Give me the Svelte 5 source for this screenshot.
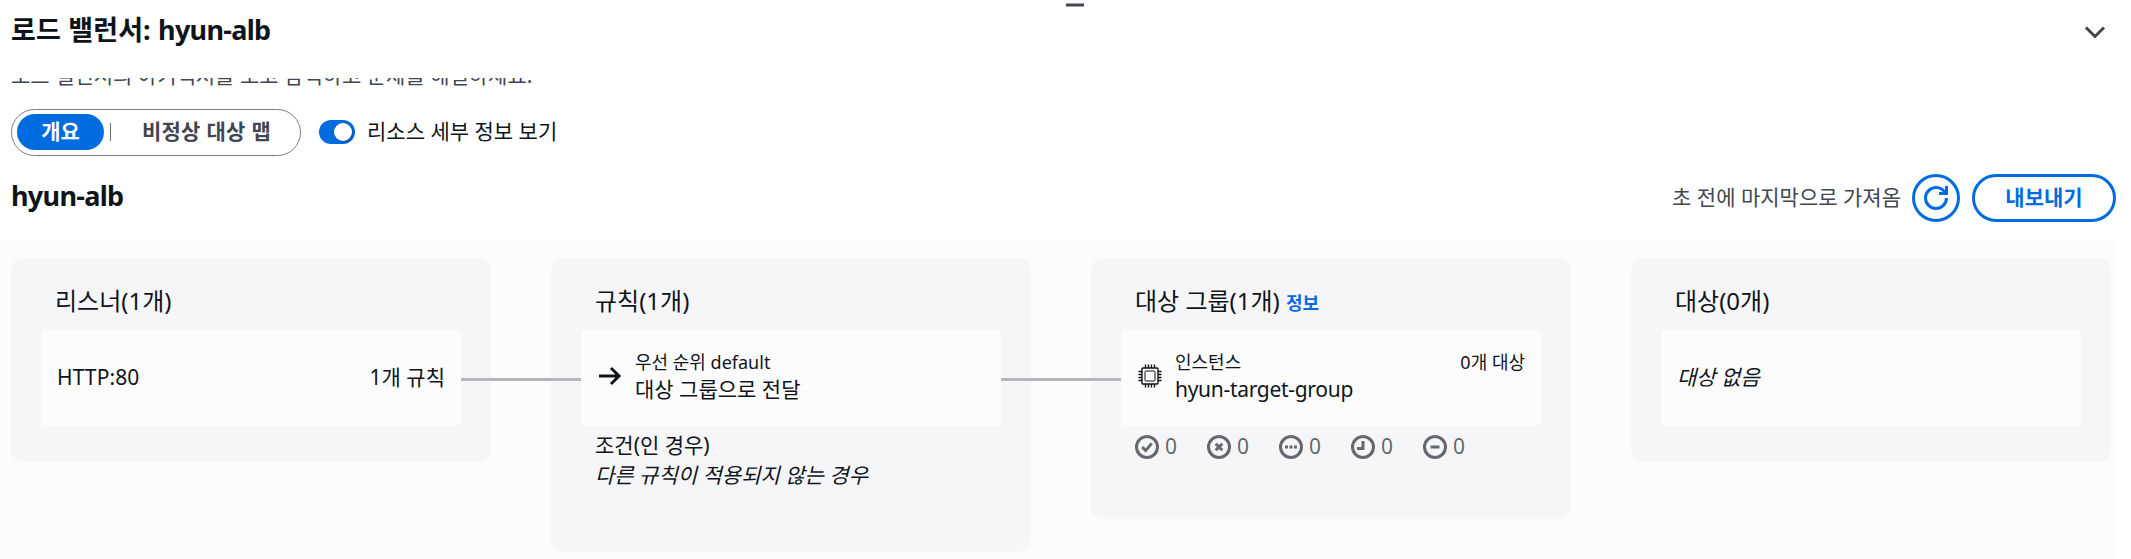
<script>
  const statuses = ['healthy', 'unhealthy', 'unused', 'initial', 'draining'];
  const pins = [7.5, 10.5, 13.5, 16.5];
</script>

<div class="panel">
  <div class="handle"></div>
  <header>
    <h1>로드 밸런서: <span class="name">hyun-alb</span></h1>
    <svg class="chevron" width="24" height="24" viewBox="0 0 24 24"><path d="M3 7.5l9 9 9-9" /></svg>
  </header>

  <div class="scroll">
    <p class="desc">로드 밸런서의 아키텍처를 보고 탐색하고 문제를 해결하세요.</p>

    <div class="controls">
      <div class="segments">
        <button class="seg active">개요</button>
        <i></i>
        <button class="seg">비정상 대상 맵</button>
      </div>
      <span class="toggle"><b></b></span>
      <span class="label">리소스 세부 정보 보기</span>
    </div>

    <div class="bar">
      <h2 class="name">hyun-alb</h2>
      <span class="fetched">초 전에 마지막으로 가져옴</span>
      <button class="round" aria-label="새로 고침">
        <svg width="24" height="24" viewBox="0 0 16 16"><path d="M15 8c0 3.87-3.13 7-7 7s-7-3.13-7-7 3.13-7 7-7c2.79 0 5.2 1.63 6.33 4" /><path d="M10 5h5V0" /></svg>
      </button>
      <button class="export">내보내기</button>
    </div>

    <main>
      <section class="card">
        <h3>리스너(1개)</h3>
        <div class="box">
          <span class="port">HTTP:80</span>
          <span class="end">1개 규칙</span>
        </div>
      </section>
      <div class="link"></div>
      <section class="card rules">
        <h3>규칙(1개)</h3>
        <div class="box">
          <svg class="lead" width="24" height="24" viewBox="0 0 24 24"><path class="arrow" d="M1 12h20M13 4l8 8-8 8" /></svg>
          <div class="lines">
            <small>우선 순위 default</small>
            <span>대상 그룹으로 전달</span>
          </div>
        </div>
        <div class="conditions">
          <div>조건(인 경우)</div>
          <em>다른 규칙이 적용되지 않는 경우</em>
        </div>
      </section>
      <div class="link"></div>
      <section class="card groups">
        <h3>대상 그룹(1개) <a href="#info">정보</a></h3>
        <div class="box">
          <svg class="lead" width="24" height="24" viewBox="0 0 24 24">
            <g class="chip">
              <rect x="4" y="4" width="16" height="16" rx="1" />
              <rect class="core" x="7" y="7" width="10" height="10" rx="1" />
              {#each pins as p}
                <path d="M{p} 0.5V4M{p} 20v3.5M0.5 {p}H4M20 {p}h3.5" />
              {/each}
            </g>
          </svg>
          <div class="lines">
            <small>인스턴스</small>
            <span class="group-name">hyun-target-group</span>
          </div>
          <small class="count">0개 대상</small>
        </div>
        <div class="statuses">
          {#each statuses as s}
            <span class="status">
              <svg width="24" height="24" viewBox="0 0 16 16">
                <circle cx="8" cy="8" r="7" />
                {#if s === 'healthy'}
                  <path d="M4.8 8l2.3 2.4 4-4.8" />
                {:else if s === 'unhealthy'}
                  <path d="M5.8 5.8l4.4 4.4M10.2 5.8l-4.4 4.4" />
                {:else if s === 'unused'}
                  <path d="M4 8h2M7 8h2M10 8h2" />
                {:else if s === 'initial'}
                  <path d="M8 4v5H4" />
                {:else}
                  <path d="M5 8h6" />
                {/if}
              </svg><span class="num">0</span>
            </span>
          {/each}
        </div>
      </section>
      <div class="link none"></div>
      <section class="card">
        <h3>대상(0개)</h3>
        <div class="box"><em>대상 없음</em></div>
      </section>
    </main>
  </div>
</div>

<style>
  :global(body) { background: #fff; overflow: hidden; }
  .panel {
    box-sizing: border-box; width: 2131px; height: 559px; overflow: hidden;
    display: flex; flex-direction: column; padding-top: 3px;
    font: 21px/30px "Noto Sans", "Noto Sans CJK KR", sans-serif; color: #0f141a;
  }
  h1, h2, h3, p { margin: 0; }
  button { font: inherit; font-weight: 700; margin: 0; padding: 0 0 2px; border: 0; background: none; }
  svg { display: block; flex: none; fill: none; }
  .handle { width: 18px; height: 2px; margin: 0 0 0 1066px; background: #424650; border: solid #a1a3a8; border-width: 1px 0; flex: none; }
  header { display: flex; justify-content: space-between; align-items: center; height: 71px; padding: 0 24px 22px 11px; box-sizing: border-box; flex: none; }
  h1, h2 { font-size: 27px; line-height: 36px; font-weight: 700; padding-bottom: 3px; }
  h1 { letter-spacing: 0.15px; }
  h2 { padding-bottom: 5px; }
  .name { letter-spacing: -0.7px; }
  .chevron { margin-top: 1px; stroke: #424650; stroke-width: 3; }
  .scroll { flex: 1; overflow: hidden; }
  .desc { height: 30px; margin-top: -18px; padding-left: 11px; color: #424650; }
  .controls { display: flex; align-items: center; height: 48px; margin: 18px 0 0 11px; }
  .segments { box-sizing: border-box; display: flex; align-items: center; width: 290px; height: 47px; border: 1px solid #7d7d86; border-radius: 24px; padding-left: 5px; }
  .seg { color: #424650; height: 36px; flex: 1; padding-left: 2px; letter-spacing: 0.3px; }
  .seg.active { flex: none; width: 87px; padding-left: 0; color: #fff; background: #006ce0; border-radius: 18px; letter-spacing: 0; }
  .segments i { width: 1px; height: 18px; margin-left: 6px; background: #656871; }
  .toggle { box-sizing: border-box; width: 36px; height: 24px; margin: 0 12px 0 18px; padding: 3px; display: flex; justify-content: flex-end; border-radius: 12px; background: #006ce0; }
  .toggle b { width: 18px; height: 18px; border-radius: 50%; background: #fff; box-shadow: 1px 1px 2px #0004; }
  .label, .fetched, .num { padding-bottom: 2px; }
  .bar { display: flex; align-items: center; height: 48px; margin: 18px 15px 18px 11px; }
  .fetched { margin-left: auto; margin-right: 11px; color: #424650; }
  .round, .export { box-sizing: border-box; height: 48px; border: 3px solid #006ce0; border-radius: 24px; color: #006ce0; }
  .round { width: 48px; padding: 0 0 0 9px; }
  .round svg { stroke: #006ce0; stroke-width: 2; }
  .export { width: 144px; margin-left: 12px; }
  main { display: flex; align-items: flex-start; box-sizing: border-box; width: 2116px; height: 320px; padding: 18px 0 0 11px; background: #fcfcfd; }
  .card { box-sizing: border-box; flex: none; width: 480px; height: 204px; padding: 23px 30px; border-radius: 12px; background: #f6f6f9; }
  .rules { height: 294px; }
  .groups { height: 261px; }
  h3 { height: 49px; padding-left: 14px; font-size: 24px; line-height: 40px; font-weight: 400; }
  h3 a { font-size: 18px; font-weight: 700; color: #006ce0; text-decoration: none; }
  .box { box-sizing: border-box; display: flex; align-items: center; height: 96px; padding: 0 16px 2px; border-radius: 4px; background: #fcfcfd; }
  .port { letter-spacing: 0.1px; }
  .end { margin-left: auto; }
  .lead { margin: -2px 13px 0 1px; }
  .arrow { stroke: #0f141a; stroke-width: 3; }
  .chip { stroke: #0f141a; stroke-width: 1.4; }
  .core { stroke-width: 1; }
  .lines { display: flex; flex-direction: column; margin-top: -2px; }
  .lines span { line-height: 27px; }
  .group-name { letter-spacing: -0.3px; }
  small { font-size: 18px; line-height: 27px; }
  .count { margin: -29px 0 0 auto; }
  .link { flex: none; width: 120px; height: 3px; margin: 120px -30px 0; background: #b4b4bb; z-index: 1; }
  .link.none { background: none; }
  .conditions { padding: 4px 14px; }
  .statuses { display: flex; padding: 9px 14px; color: #656871; }
  .status { display: flex; align-items: center; gap: 6px; width: 72px; height: 24px; }
  .status svg { stroke: #656871; stroke-width: 2; }
</style>
